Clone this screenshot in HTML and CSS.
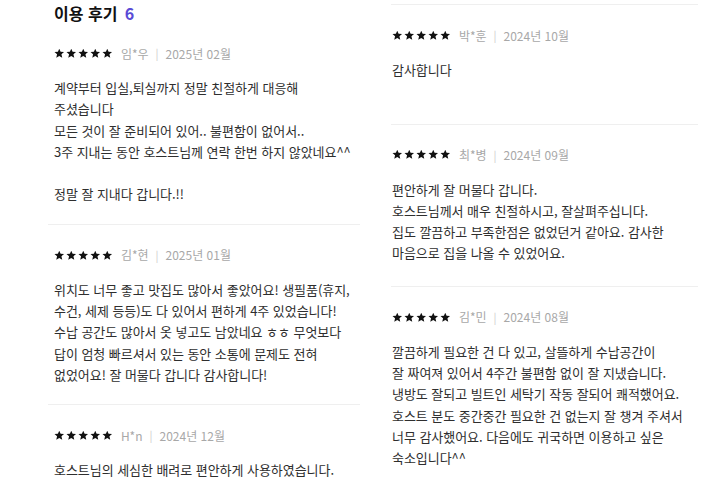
FILE: index.html
```html
<!DOCTYPE html>
<html lang="ko">
<head>
<meta charset="utf-8">
<link rel="stylesheet" href="styles.css">
</head>
<body>
<svg width="0" height="0" class="defs">
  <defs>
    <symbol id="star" viewBox="0 0 24 24"><path d="M12 1.5l3.1 7.2 7.8.7-5.9 5.1 1.8 7.6L12 18.1l-6.8 4 1.8-7.6-5.9-5.1 7.8-.7z"/></symbol>
  </defs>
</svg>
<main class="reviews">
  <section class="col col-left">
    <h2 class="title">이용 후기 <span class="count">6</span></h2>

    <article class="review first">
      <div class="meta">
        <span class="stars"><svg><use href="#star"/></svg><svg><use href="#star"/></svg><svg><use href="#star"/></svg><svg><use href="#star"/></svg><svg><use href="#star"/></svg></span>
        <span class="name">임*우</span><span class="sep">|</span><span class="date">2025년 02월</span>
      </div>
      <p class="body">계약부터 입실,퇴실까지 정말 친절하게 대응해<br>주셨습니다<br>모든 것이 잘 준비되어 있어.. 불편함이 없어서..<br>3주 지내는 동안 호스트님께 연락 한번 하지 않았네요^^<br><br>정말 잘 지내다 갑니다.!!</p>
    </article>

    <article class="review">
      <div class="meta">
        <span class="stars"><svg><use href="#star"/></svg><svg><use href="#star"/></svg><svg><use href="#star"/></svg><svg><use href="#star"/></svg><svg><use href="#star"/></svg></span>
        <span class="name">김*현</span><span class="sep">|</span><span class="date">2025년 01월</span>
      </div>
      <p class="body">위치도 너무 좋고 맛집도 많아서 좋았어요! 생필품(휴지,<br>수건, 세제 등등)도 다 있어서 편하게 4주 있었습니다!<br>수납 공간도 많아서 옷 넣고도 남았네요 ㅎㅎ 무엇보다<br>답이 엄청 빠르셔서 있는 동안 소통에 문제도 전혀<br>없었어요! 잘 머물다 갑니다 감사합니다!</p>
    </article>

    <article class="review last">
      <div class="meta">
        <span class="stars"><svg><use href="#star"/></svg><svg><use href="#star"/></svg><svg><use href="#star"/></svg><svg><use href="#star"/></svg><svg><use href="#star"/></svg></span>
        <span class="name">H*n</span><span class="sep">|</span><span class="date">2024년 12월</span>
      </div>
      <p class="body">호스트님의 세심한 배려로 편안하게 사용하였습니다.</p>
    </article>
  </section>

  <section class="col col-right">
    <article class="review topline">
      <div class="meta">
        <span class="stars"><svg><use href="#star"/></svg><svg><use href="#star"/></svg><svg><use href="#star"/></svg><svg><use href="#star"/></svg><svg><use href="#star"/></svg></span>
        <span class="name">박*훈</span><span class="sep">|</span><span class="date">2024년 10월</span>
      </div>
      <p class="body">감사합니다<br><br></p>
    </article>

    <article class="review">
      <div class="meta">
        <span class="stars"><svg><use href="#star"/></svg><svg><use href="#star"/></svg><svg><use href="#star"/></svg><svg><use href="#star"/></svg><svg><use href="#star"/></svg></span>
        <span class="name">최*병</span><span class="sep">|</span><span class="date">2024년 09월</span>
      </div>
      <p class="body">편안하게 잘 머물다 갑니다.<br>호스트님께서 매우 친절하시고, 잘살펴주십니다.<br>집도 깔끔하고 부족한점은 없었던거 같아요. 감사한<br>마음으로 집을 나올 수 있었어요.</p>
    </article>

    <article class="review last">
      <div class="meta">
        <span class="stars"><svg><use href="#star"/></svg><svg><use href="#star"/></svg><svg><use href="#star"/></svg><svg><use href="#star"/></svg><svg><use href="#star"/></svg></span>
        <span class="name">김*민</span><span class="sep">|</span><span class="date">2024년 08월</span>
      </div>
      <p class="body">깔끔하게 필요한 건 다 있고, 살뜰하게 수납공간이<br>잘 짜여져 있어서 4주간 불편함 없이 잘 지냈습니다.<br>냉방도 잘되고 빌트인 세탁기 작동 잘되어 쾌적했어요.<br>호스트 분도 중간중간 필요한 건 없는지 잘 챙겨 주셔서<br>너무 감사했어요. 다음에도 귀국하면 이용하고 싶은<br>숙소입니다^^</p>
    </article>
  </section>
</main>
</body>
</html>
```

FILE: styles.css
```css
html, body {
  margin: 0;
  padding: 0;
  background: #ffffff;
}

body {
  font-family: "Noto Sans CJK KR", "Noto Sans", sans-serif;
  color: #333333;
  width: 720px;
  height: 480px;
  overflow: hidden;
}

.defs {
  position: absolute;
  width: 0;
  height: 0;
}

.reviews {
  display: grid;
  grid-template-columns: 312px 307px;
  column-gap: 31px;
  padding-left: 48px;
  align-items: start;
}

.col {
  display: flex;
  flex-direction: column;
}

.col-left .title,
.col-left .review {
  padding-left: 6px;
  padding-right: 6px;
}

.col-right {
  padding-top: 4px;
}

.col-right .review {
  padding-left: 1px;
  padding-right: 1px;
  padding-bottom: 22px;
}

.title {
  margin: 0;
  font-size: 16px;
  line-height: 26px;
  font-weight: 700;
  color: #111111;
  letter-spacing: 0;
}

.count {
  color: #5a4bd6;
  margin-left: 3px;
}

.review {
  padding-top: 21px;
  padding-bottom: 19px;
  border-bottom: 1px solid #efefef;
}

.review.first {
  padding-top: 18px;
}

.review.topline {
  border-top: 1px solid #efefef;
}

.review.last {
  border-bottom: none;
}

.meta {
  display: flex;
  align-items: center;
  height: 18px;
  font-size: 12px;
  color: #a8a8a8;
}

.stars {
  display: flex;
  gap: 1.6px;
  margin-right: 8px;
}

.stars svg {
  width: 10.5px;
  height: 10.5px;
  fill: #111111;
}

.sep {
  color: #cccccc;
  margin: 0 7px;
  font-size: 11px;
}

.body {
  margin: 15px 0 0;
  font-size: 13px;
  line-height: 21.3px;
  letter-spacing: -0.05px;
  color: #2e2e2e;
  white-space: nowrap;
}
```
